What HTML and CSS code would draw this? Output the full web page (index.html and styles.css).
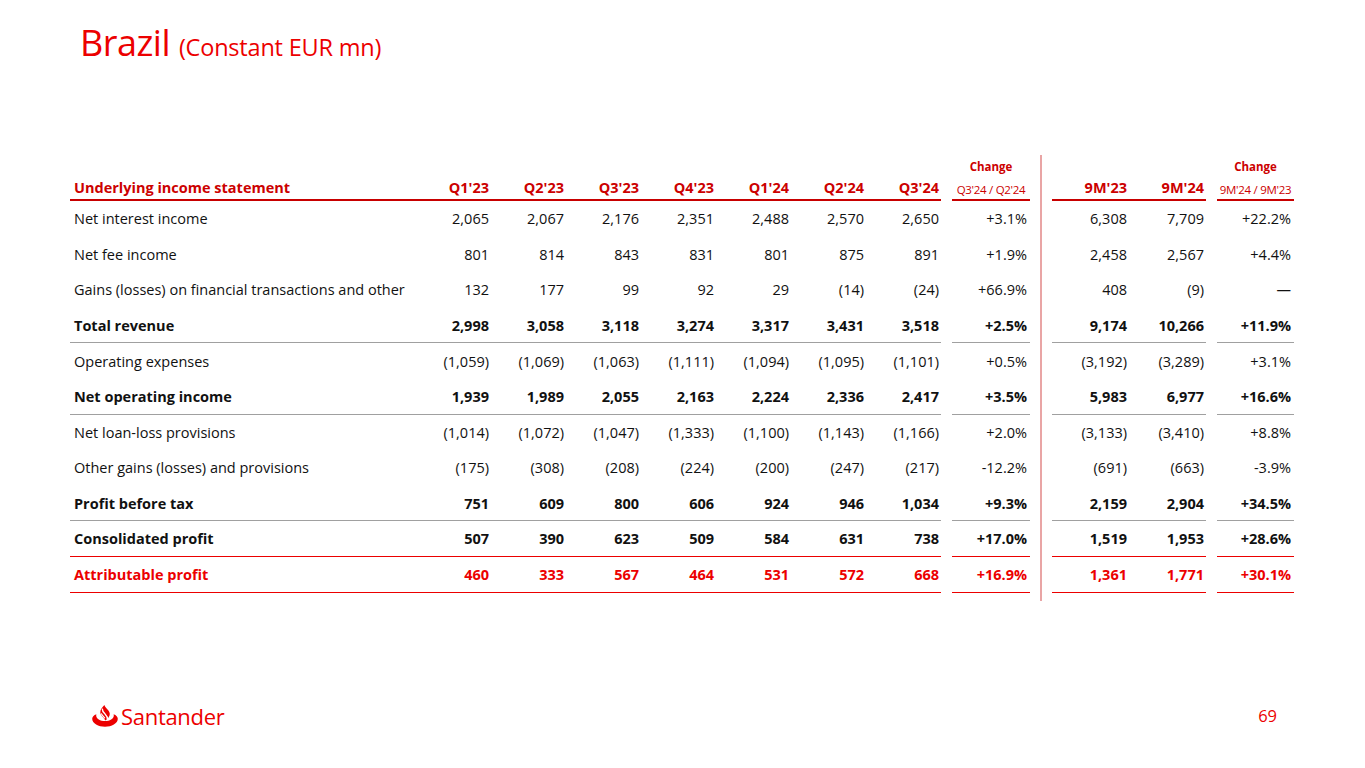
FILE: index.html
```html
<!DOCTYPE html>
<html lang="en">
<head>
<meta charset="utf-8">
<title>Brazil (Constant EUR mn)</title>
<link rel="stylesheet" href="styles.css">
</head>
<body>
<div class="page">
  <h1 class="title">Brazil <span class="sub">(Constant EUR mn)</span></h1>

  <div class="tbl">
    <div class="divider"></div>

    <div class="row head">
      <div class="c lbl">Underlying income statement</div>
      <div class="c">Q1'23</div><div class="c">Q2'23</div><div class="c">Q3'23</div><div class="c">Q4'23</div><div class="c">Q1'24</div><div class="c">Q2'24</div><div class="c">Q3'24</div>
      <div class="sp"></div>
      <div class="c chg"><span class="ct">Change</span><span class="cs">Q3'24 / Q2'24</span></div>
      <div class="c">9M'23</div><div class="c">9M'24</div>
      <div class="sp"></div>
      <div class="c chg"><span class="ct">Change</span><span class="cs">9M'24 / 9M'23</span></div>
    </div>

    <div class="row">
      <div class="c lbl">Net interest income</div>
      <div class="c">2,065</div><div class="c">2,067</div><div class="c">2,176</div><div class="c">2,351</div><div class="c">2,488</div><div class="c">2,570</div><div class="c">2,650</div>
      <div class="sp"></div><div class="c pc">+3.1%</div>
      <div class="c">6,308</div><div class="c">7,709</div>
      <div class="sp"></div><div class="c pc">+22.2%</div>
    </div>

    <div class="row">
      <div class="c lbl">Net fee income</div>
      <div class="c">801</div><div class="c">814</div><div class="c">843</div><div class="c">831</div><div class="c">801</div><div class="c">875</div><div class="c">891</div>
      <div class="sp"></div><div class="c pc">+1.9%</div>
      <div class="c">2,458</div><div class="c">2,567</div>
      <div class="sp"></div><div class="c pc">+4.4%</div>
    </div>

    <div class="row">
      <div class="c lbl">Gains (losses) on financial transactions and other</div>
      <div class="c">132</div><div class="c">177</div><div class="c">99</div><div class="c">92</div><div class="c">29</div><div class="c">(14)</div><div class="c">(24)</div>
      <div class="sp"></div><div class="c pc">+66.9%</div>
      <div class="c">408</div><div class="c">(9)</div>
      <div class="sp"></div><div class="c pc">—</div>
    </div>

    <div class="row bold sep">
      <div class="c lbl">Total revenue</div>
      <div class="c">2,998</div><div class="c">3,058</div><div class="c">3,118</div><div class="c">3,274</div><div class="c">3,317</div><div class="c">3,431</div><div class="c">3,518</div>
      <div class="sp"></div><div class="c pc">+2.5%</div>
      <div class="c">9,174</div><div class="c">10,266</div>
      <div class="sp"></div><div class="c pc">+11.9%</div>
    </div>

    <div class="row">
      <div class="c lbl">Operating expenses</div>
      <div class="c">(1,059)</div><div class="c">(1,069)</div><div class="c">(1,063)</div><div class="c">(1,111)</div><div class="c">(1,094)</div><div class="c">(1,095)</div><div class="c">(1,101)</div>
      <div class="sp"></div><div class="c pc">+0.5%</div>
      <div class="c">(3,192)</div><div class="c">(3,289)</div>
      <div class="sp"></div><div class="c pc">+3.1%</div>
    </div>

    <div class="row bold sep">
      <div class="c lbl">Net operating income</div>
      <div class="c">1,939</div><div class="c">1,989</div><div class="c">2,055</div><div class="c">2,163</div><div class="c">2,224</div><div class="c">2,336</div><div class="c">2,417</div>
      <div class="sp"></div><div class="c pc">+3.5%</div>
      <div class="c">5,983</div><div class="c">6,977</div>
      <div class="sp"></div><div class="c pc">+16.6%</div>
    </div>

    <div class="row">
      <div class="c lbl">Net loan-loss provisions</div>
      <div class="c">(1,014)</div><div class="c">(1,072)</div><div class="c">(1,047)</div><div class="c">(1,333)</div><div class="c">(1,100)</div><div class="c">(1,143)</div><div class="c">(1,166)</div>
      <div class="sp"></div><div class="c pc">+2.0%</div>
      <div class="c">(3,133)</div><div class="c">(3,410)</div>
      <div class="sp"></div><div class="c pc">+8.8%</div>
    </div>

    <div class="row">
      <div class="c lbl">Other gains (losses) and provisions</div>
      <div class="c">(175)</div><div class="c">(308)</div><div class="c">(208)</div><div class="c">(224)</div><div class="c">(200)</div><div class="c">(247)</div><div class="c">(217)</div>
      <div class="sp"></div><div class="c pc">-12.2%</div>
      <div class="c">(691)</div><div class="c">(663)</div>
      <div class="sp"></div><div class="c pc">-3.9%</div>
    </div>

    <div class="row bold sep">
      <div class="c lbl">Profit before tax</div>
      <div class="c">751</div><div class="c">609</div><div class="c">800</div><div class="c">606</div><div class="c">924</div><div class="c">946</div><div class="c">1,034</div>
      <div class="sp"></div><div class="c pc">+9.3%</div>
      <div class="c">2,159</div><div class="c">2,904</div>
      <div class="sp"></div><div class="c pc">+34.5%</div>
    </div>

    <div class="row bold redsep">
      <div class="c lbl">Consolidated profit</div>
      <div class="c">507</div><div class="c">390</div><div class="c">623</div><div class="c">509</div><div class="c">584</div><div class="c">631</div><div class="c">738</div>
      <div class="sp"></div><div class="c pc">+17.0%</div>
      <div class="c">1,519</div><div class="c">1,953</div>
      <div class="sp"></div><div class="c pc">+28.6%</div>
    </div>

    <div class="row bold redsep red">
      <div class="c lbl">Attributable profit</div>
      <div class="c">460</div><div class="c">333</div><div class="c">567</div><div class="c">464</div><div class="c">531</div><div class="c">572</div><div class="c">668</div>
      <div class="sp"></div><div class="c pc">+16.9%</div>
      <div class="c">1,361</div><div class="c">1,771</div>
      <div class="sp"></div><div class="c pc">+30.1%</div>
    </div>
  </div>

  <div class="footer">
    <div class="logo">
      <svg class="flame" viewBox="0 0 26 22" width="26" height="22" aria-hidden="true">
        <path d="M4.4 9.2 C1.7 10.2 0.2 11.8 0.2 13.8 C0.2 18.4 6.4 21.8 13 21.8 C19.6 21.8 25.8 18.4 25.8 13.8 C25.8 11.8 24.3 10.2 21.6 9.2 C21.7 9.6 21.8 10 21.8 10.4 C21.8 13.8 17.8 16 13 16 C8.2 16 4.2 13.8 4.2 10.4 C4.2 10 4.3 9.6 4.4 9.2 Z" fill="#ec0000"/>
        <path d="M12.4 0 C10.2 2.4 8.3 4.6 8.3 7.2 C8.3 9.2 9.5 10.5 10.6 11.8 C11.8 13.2 12.9 14.2 13.1 15.6 C15.9 13.8 17.8 11.6 17.8 9 C17.8 7 16.6 5.6 15.3 4.2 C14.2 3 12.9 1.8 12.4 0 Z" fill="#ec0000"/>
        <path d="M10.4 4.2 C10.2 6.6 11.8 7.9 13.4 9.4 C14.8 10.8 15.6 12.1 15.3 13.8" fill="none" stroke="#fff" stroke-width="1.4" stroke-linecap="round"/>
        <path d="M9.5 8.8 C9.9 10.2 11.3 11.3 12.6 12.8" fill="none" stroke="#fff" stroke-width="1.2" stroke-linecap="round"/>
      </svg>
      <span class="brand">Santander</span>
    </div>
    <div class="pageno">69</div>
  </div>
</div>
</body>
</html>
```

FILE: styles.css
```css
* { box-sizing: border-box; }
html, body { margin: 0; padding: 0; background: #fff; }
body {
  font-family: "Open Sans", "Noto Sans", "Liberation Sans", sans-serif;
  color: #111;
}
.page {
  width: 1365px;
  height: 768px;
  display: flex;
  flex-direction: column;
  overflow: hidden;
}
.title {
  margin: 0;
  padding: 22px 0 0 80px;
  font-weight: 400;
  font-size: 36px;
  line-height: 42px;
  color: #ec0000;
  letter-spacing: -0.5px;
}
.title .sub {
  font-size: 23.5px;
  letter-spacing: -0.2px;
}

.tbl {
  margin: 87px 0 0 70px;
  display: grid;
  grid-template-columns: 346px repeat(7, 75px) 11px 78px 22px 77px 77px 11px 77px;
  grid-template-rows: 46px repeat(11, 35.6px) 8px;
  font-size: 14.5px;
  width: 1224px;
}
.divider {
  grid-column: 11;
  grid-row: 1 / -1;
  justify-self: center;
  width: 1.5px;
  background: #e9a5a5;
}
.row { display: contents; }
.c {
  display: flex;
  align-items: center;
  justify-content: flex-end;
  padding-right: 2px;
  white-space: nowrap;
}
.c.lbl { justify-content: flex-start; padding-left: 4px; padding-right: 0; }
.c.pc { padding-right: 3px; }

.head .c {
  align-items: flex-end;
  padding-bottom: 1px;
  font-weight: 700;
  color: #cc0000;
  border-bottom: 2px solid #c80000;
  line-height: 20px;
}
.head .c.chg {
  flex-direction: column;
  align-items: center;
  justify-content: flex-end;
  padding: 0 0 2px;
}
.chg .ct { font-size: 11.5px; font-weight: 700; line-height: 14px; margin-bottom: 9px; }
.chg .cs { font-size: 11.5px; font-weight: 400; line-height: 14px; letter-spacing: -0.3px; }

.bold .c { font-weight: 700; }
.sep .c { border-bottom: 1px solid #a0a0a0; }
.redsep .c { border-bottom: 1.5px solid #ec0000; }
.red .c { color: #ec0000; }

.footer {
  margin-top: auto;
  height: 75px;
  display: flex;
  justify-content: space-between;
  align-items: flex-start;
  padding: 10px 88px 0 92px;
}
.logo { display: flex; align-items: center; gap: 3px; }
.flame { display: block; }
.brand {
  font-size: 22px;
  color: #ec0000;
  letter-spacing: -0.3px;
  line-height: 26px;
}
.pageno {
  font-size: 16.5px;
  color: #ec0000;
  line-height: 24px;
  padding-top: 1px;
}
```
